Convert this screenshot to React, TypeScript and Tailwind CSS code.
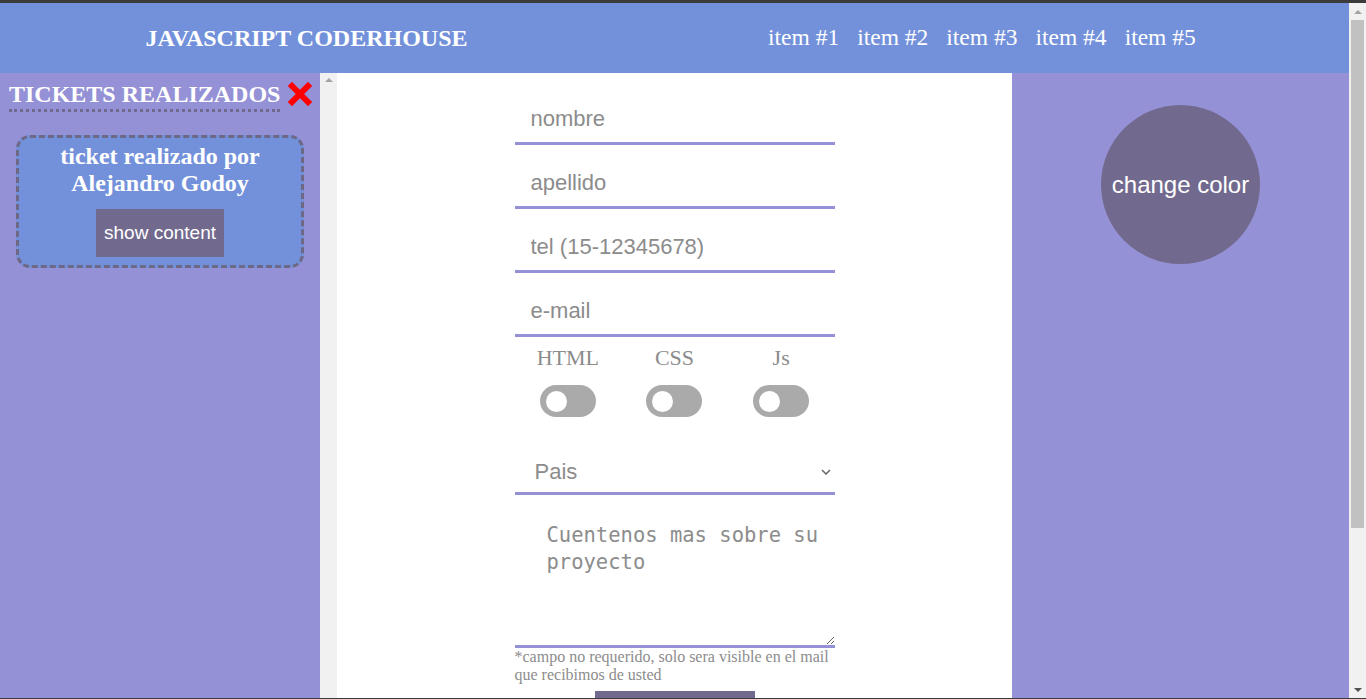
import { useState } from "react";

const serif = "font-['Liberation_Serif',_'Times_New_Roman',_serif]";
const sans = "font-['Liberation_Sans',_Arial,_sans-serif]";

const navItems = ["item #1", "item #2", "item #3", "item #4", "item #5"];
const skills = ["HTML", "CSS", "Js"];

function Toggle() {
  return (
    <div className="w-[56px] h-[32px] rounded-full bg-[#aaaaaa] flex items-center pl-[6px]">
      <div className="w-[21px] h-[21px] rounded-full bg-white" />
    </div>
  );
}

function Field({ placeholder }: { placeholder: string }) {
  return (
    <input
      placeholder={placeholder}
      className={`${sans} block w-full h-[51px] px-4 pt-[2px] text-[22px] text-[#555] placeholder:text-[#8c8c8c] border-b-[3px] border-[#9591d6] outline-none bg-white`}
    />
  );
}

export default function App() {
  const [open, setOpen] = useState(false);

  return (
    <div className="h-[699px] overflow-hidden flex flex-col bg-white">
      <div className="h-[3px] bg-[#3b3b3b]" />
      <div className="flex flex-1 min-h-0">
        <div className="flex-1 flex flex-col min-w-0">
          {/* barra superior */}
          <header className={`${serif} h-[70px] shrink-0 bg-[#7391da] text-white flex items-center`}>
            <h1 className="w-[613px] text-center text-[24px] font-bold">JAVASCRIPT CODERHOUSE</h1>
            <nav className="ml-[155px] flex gap-[18px] text-[23.5px]">
              {navItems.map((item) => (
                <a key={item} href="#">
                  {item}
                </a>
              ))}
            </nav>
          </header>

          <div className="flex flex-1 min-h-0">
            {/* tickets */}
            <aside className={`${serif} w-[320px] bg-[#9591d6] text-white pl-[9px] pt-[7px]`}>
              <div className="flex items-start gap-2">
                <h2 className="text-[24px] font-bold leading-[28px] border-b-[3px] border-dotted border-[#726a8e] pb-[1px]">
                  TICKETS REALIZADOS
                </h2>
                <svg width="24" height="24" viewBox="0 0 24 24" className="mt-[2px]">
                  <path d="M4 4 L20 20 M20 4 L4 20" stroke="#ff0000" strokeWidth="6" strokeLinecap="square" />
                </svg>
              </div>
              <div className="mt-[23px] ml-[7px] w-[288px] h-[133px] rounded-[14px] border-[3px] border-dashed border-[#6e6887] bg-[#7391da] flex flex-col items-center pt-[5px]">
                <p className="text-[24px] font-bold leading-[27px] text-center">
                  ticket realizado por
                  <br />
                  Alejandro Godoy
                </p>
                <button
                  onClick={() => setOpen(!open)}
                  className={`${sans} mt-[12px] w-[128px] h-[48px] bg-[#726a8e] text-white text-[19px]`}
                >
                  show content
                </button>
              </div>
            </aside>
            <div className="w-[17px] bg-[#f1f1f1] flex justify-center pt-[5px]">
              <div className="w-0 h-0 border-l-[4px] border-r-[4px] border-b-[4px] border-l-transparent border-r-transparent border-b-[#a3a3a3]" />
            </div>

            {/* formulario */}
            <main className="w-[675px] bg-white">
              <form className="w-[320px] mx-auto pt-[21px] flex flex-col">
                <div className="flex flex-col gap-[13px]">
                  <Field placeholder="nombre" />
                  <Field placeholder="apellido" />
                  <Field placeholder="tel (15-12345678)" />
                  <Field placeholder="e-mail" />
                </div>
                <div className="grid grid-cols-3 mt-[7px]">
                  {skills.map((s) => (
                    <div key={s} className="flex flex-col items-center">
                      <span className={`${serif} text-[22px] leading-[28px] text-[#8c8c8c]`}>{s}</span>
                      <div className="mt-[13px]">
                        <Toggle />
                      </div>
                    </div>
                  ))}
                </div>
                <div className="relative mt-[30px]">
                  <select
                    className={`${sans} appearance-none w-full h-[48px] pl-5 pt-[3px] text-[22px] text-[#8c8c8c] border-b-[3px] border-[#9591d6] outline-none bg-white`}
                  >
                    <option>Pais</option>
                  </select>
                  <svg
                    width="10"
                    height="6"
                    viewBox="0 0 10 6"
                    className="absolute right-[4px] top-[22px] pointer-events-none"
                  >
                    <path d="M1 1 L5 5 L9 1" stroke="#666" strokeWidth="1.5" fill="none" />
                  </svg>
                </div>
                <textarea
                  placeholder="Cuentenos mas sobre su proyecto"
                  className="mt-[20px] h-[133px] w-full pl-8 pr-3 pt-[7px] font-['DejaVu_Sans_Mono',_monospace] text-[20.5px] leading-[27px] text-[#555] placeholder:text-[#8c8c8c] border-b-[3px] border-[#9591d6] outline-none resize-y"
                />
                <p className={`${serif} mt-0 text-[16px] leading-[18px] text-[#8c8c8c]`}>
                  *campo no requerido, solo sera visible en el mail que recibimos de usted
                </p>
                <button
                  type="button"
                  className={`${sans} mt-[7px] mx-auto w-[160px] h-[48px] pt-[14px] bg-[#726a8e] text-white text-[19px] flex items-start justify-center`}
                >
                  enviar
                </button>
              </form>
            </main>

            {/* cambio de color */}
            <aside className="flex-1 bg-[#9591d6] flex justify-center pt-[32px]">
              <button className={`${sans} w-[159px] h-[159px] rounded-full bg-[#726a8e] text-white text-[24px]`}>
                change color
              </button>
            </aside>
          </div>
        </div>

        {/* scrollbar de la pagina */}
        <div className="w-[17px] bg-[#f1f1f1] flex flex-col items-center">
          <div className="h-[17px] flex items-center justify-center">
            <div className="w-0 h-0 border-l-[4px] border-r-[4px] border-b-[4px] border-l-transparent border-r-transparent border-b-[#a3a3a3]" />
          </div>
          <div className="w-[13px] h-[508px] bg-[#c1c1c1]" />
          <div className="flex-1" />
          <div className="h-[17px] flex items-center justify-center">
            <div className="w-0 h-0 border-l-[4px] border-r-[4px] border-t-[4px] border-l-transparent border-r-transparent border-t-[#505050]" />
          </div>
        </div>
      </div>
      <div className="h-px bg-[#3b3b3b]" />
    </div>
  );
}
